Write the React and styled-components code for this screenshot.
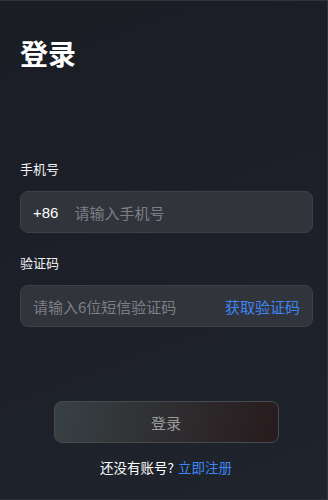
import React from 'react';
import styled, { createGlobalStyle } from 'styled-components';

const GlobalStyle = createGlobalStyle`
  html, body {
    margin: 0;
    padding: 0;
    background: #1c1f27;
  }
  * {
    box-sizing: border-box;
  }
`;

const StyledPage = styled.div`
  width: 328px;
  height: 500px;
  display: flex;
  flex-direction: column;
  padding: 0 14px 0 20px;
  background: linear-gradient(160deg, #1b1d25 0%, #1d2029 55%, #1f242c 100%);
  border-top: 1px solid #30333a;
  border-right: 1px solid #30333a;
  border-bottom: 1px solid #2b2f36;
  font-family: 'Noto Sans CJK SC', 'Noto Sans', sans-serif;
  color: #ffffff;
  overflow: hidden;
`;

const StyledTitle = styled.h1`
  margin: 30px 0 0;
  font-size: 28px;
  line-height: 44px;
  font-weight: 700;
`;

const StyledForm = styled.div`
  display: flex;
  flex-direction: column;
  margin-top: 84px;
`;

const StyledField = styled.div`
  display: flex;
  flex-direction: column;
  gap: 13px;
  margin-bottom: ${({ $last }) => ($last ? '0' : '20px')};
`;

const StyledLabel = styled.label`
  font-size: 13px;
  line-height: 19px;
  color: #f2f3f5;
`;

const StyledInputBox = styled.div`
  height: 42px;
  display: flex;
  align-items: center;
  padding: 0 12px;
  gap: 16px;
  background: #31343b;
  border: 1px solid #3d4047;
  border-radius: 8px;
  font-size: 15px;
`;

const StyledPrefix = styled.span`
  color: #ffffff;
  font-family: 'Liberation Sans', 'Noto Sans CJK SC', sans-serif;
`;

const StyledInput = styled.input`
  flex: 1;
  min-width: 0;
  background: transparent;
  border: none;
  outline: none;
  padding: 0;
  font-family: inherit;
  font-size: 15px;
  color: #ffffff;

  &::placeholder {
    color: #7c7f86;
  }
`;

const StyledCodeLink = styled.span`
  color: #3f86f3;
  font-size: 15px;
  white-space: nowrap;
`;

const StyledButton = styled.button`
  align-self: center;
  width: 225px;
  height: 42px;
  margin: 74px 0 0 -1px;
  border-radius: 8px;
  border: 1px solid #46494e;
  background: linear-gradient(100deg, #374144 0%, #2f2e31 50%, #271b1d 100%);
  color: #9c9c9e;
  font-family: inherit;
  font-size: 15px;
`;

const StyledFooter = styled.p`
  margin: 14px 0 0 -1px;
  text-align: center;
  font-size: 13.5px;
  line-height: 20px;
  color: #ffffff;
`;

const StyledLink = styled.a`
  color: #3f86f3;
  text-decoration: none;
  margin-left: 4px;
`;

const App = () => {
  return (
    <>
      <GlobalStyle />
      <StyledPage>
        <StyledTitle>登录</StyledTitle>
        <StyledForm>
          <StyledField>
            <StyledLabel>手机号</StyledLabel>
            <StyledInputBox>
              <StyledPrefix>+86</StyledPrefix>
              <StyledInput placeholder="请输入手机号" />
            </StyledInputBox>
          </StyledField>
          <StyledField $last>
            <StyledLabel>验证码</StyledLabel>
            <StyledInputBox>
              <StyledInput placeholder="请输入6位短信验证码" />
              <StyledCodeLink>获取验证码</StyledCodeLink>
            </StyledInputBox>
          </StyledField>
        </StyledForm>
        <StyledButton>登录</StyledButton>
        <StyledFooter>
          还没有账号?<StyledLink href="#">立即注册</StyledLink>
        </StyledFooter>
      </StyledPage>
    </>
  );
};

export default App;
